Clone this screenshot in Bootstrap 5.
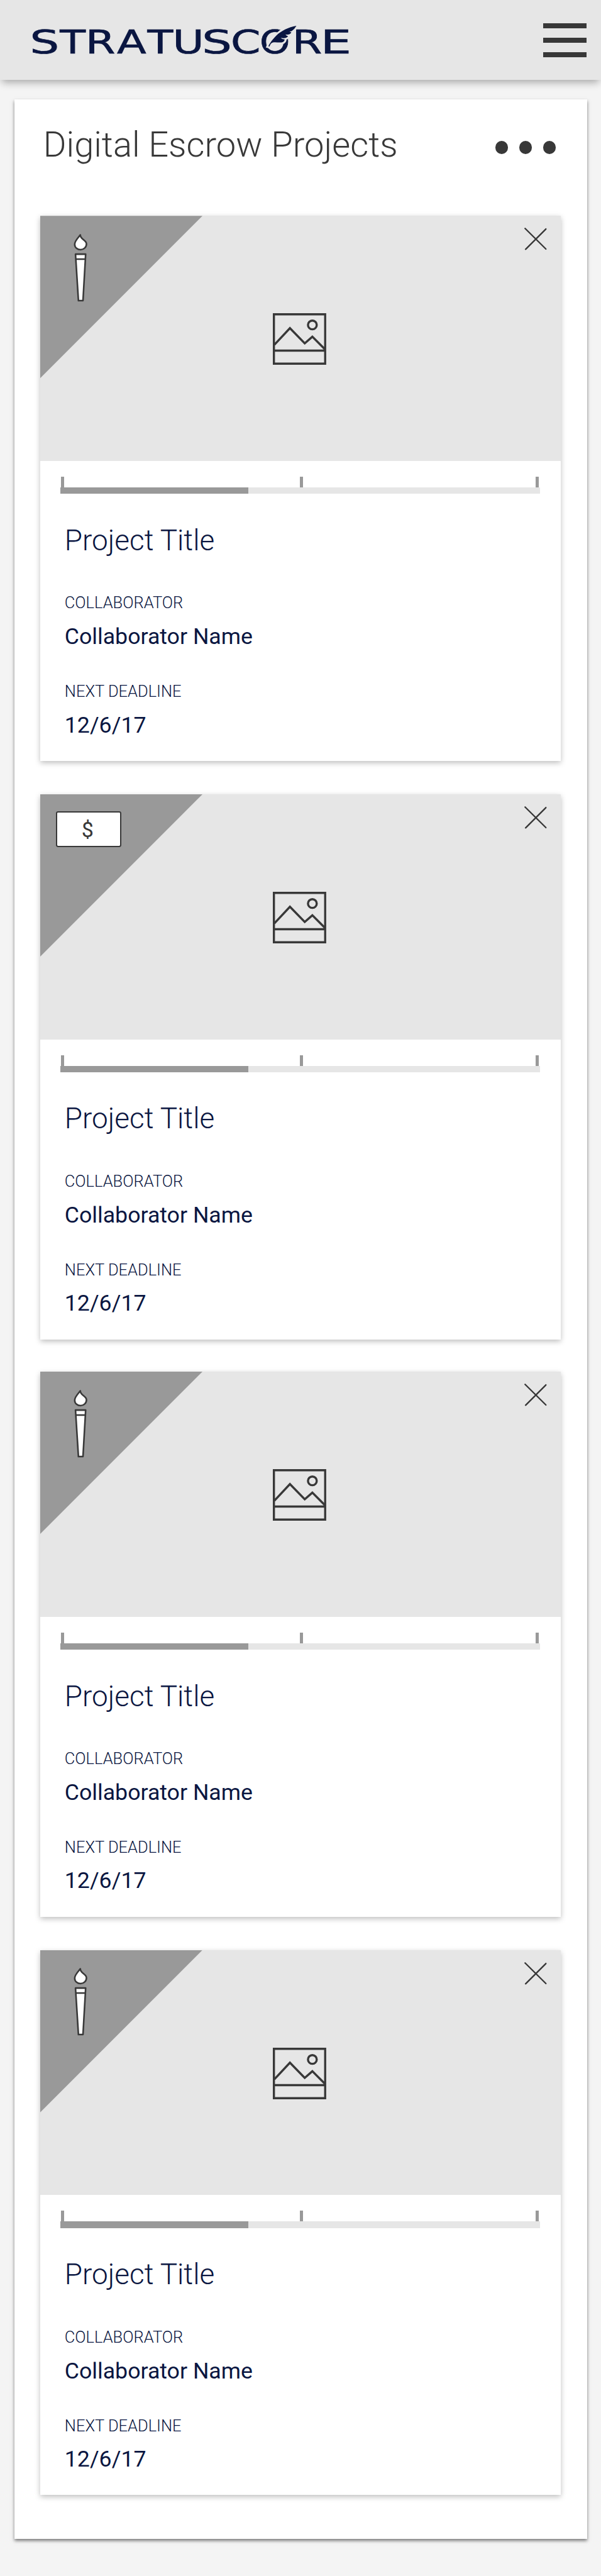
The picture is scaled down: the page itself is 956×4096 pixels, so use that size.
<!DOCTYPE html>
<html lang="en">
<head>
<meta charset="utf-8">
<meta name="viewport" content="width=device-width, initial-scale=1">
<title>Digital Escrow Projects</title>
<link href="https://cdn.jsdelivr.net/npm/bootstrap@5.3.0/dist/css/bootstrap.min.css" rel="stylesheet">
<style>
  /* 1rem is ten design pixels */
  html { font-size: 8.4965px; }
  body { background: #f4f4f4; color: #0a1641; font-family: Roboto, "Liberation Sans", sans-serif; }
  svg { display: block; overflow: visible; }

  .site-bar { height: 15rem; padding: 0 2.7rem 0 6rem; background: #e6e6e6; box-shadow: 0 .8rem 1.4rem -.3rem rgba(0,0,0,.32); }
  .logo { width: 60rem; height: 15rem; margin-left: -6rem; }
  .logo text { font-family: "DejaVu Sans", sans-serif; font-size: 60.4px; fill: #0a1641; stroke: #0a1641; stroke-width: .8px; }
  .menu-btn { width: 8.1rem; height: 6.3rem; color: #383838; margin-top: .3rem; }
  .menu-btn span { height: .9rem; background: currentColor; }

  .panel { width: 107.2rem; height: 456.5rem; margin: 3.6rem 0 7rem 2.7rem; padding: 4.75rem 5rem 0 4.8rem; background: #fff; box-shadow: 0 .3rem .6rem rgba(0,0,0,.5); }
  .panel-head { height: 17.05rem; padding: 0 .8rem 0 .6rem; color: #383838; }
  .panel-head h1 { font-size: 6.6rem; line-height: 7.6rem; font-weight: 300; }
  .dots { gap: 2.1rem; margin-top: 3.05rem; }
  .dots span { width: 2.4rem; height: 2.4rem; background: #383838; border-radius: 50%; }

  .project-list { gap: 6.25rem; }
  .project { width: 97.5rem; height: 102rem; border: 0; border-radius: 0; color: inherit; box-shadow: 0 .3rem 1rem rgba(0,0,0,.26); }
  .project:nth-child(3) { margin-top: -.2rem; }
  .cover { height: 45.85rem; background: #e6e6e6; color: #383838; }
  .corner { width: 30.4rem; height: 30.4rem; background: #999; clip-path: polygon(0 0, 100% 0, 0 100%); }
  .torch { width: 3rem; height: 13rem; left: 6.05rem; top: 3.25rem; }
  .bill { width: 12.2rem; height: 6.75rem; left: 3rem; top: 3.2rem; background: #fff; border: .3rem solid #383838; border-radius: .4rem; font-size: 4rem; line-height: 1; padding-right: .4rem; }
  .close-btn { width: 4.2rem; height: 4.2rem; right: 2.65rem; top: 2.25rem; }
  .photo { width: 10rem; height: 9.7rem; margin: .35rem 0 0 -.4rem; }

  .track { margin: 2.95rem 3.95rem 0 3.75rem; }
  .ticks { height: 2rem; padding: 0 .2rem; }
  .ticks span { width: .6rem; background: #999; }
  .ticks span:nth-child(2) { margin-left: .6rem; }
  .bar { height: 1.2rem; background: #e6e6e6; }
  .bar div { background: #999; }

  .facts { padding: 5.5rem 0 0 4.6rem; }
  .facts h2 { font-size: 5.4rem; line-height: 6.4rem; font-weight: 300; margin: 0 0 6.75rem; }
  .facts dt { font-size: 3rem; line-height: 3.6rem; font-weight: 300; margin-bottom: 2rem; }
  .facts dd { font-size: 4.2rem; line-height: 5rem; font-weight: 400; margin-bottom: 5.95rem; }
</style>
</head>
<body>
<svg width="0" height="0" class="position-absolute" aria-hidden="true">
  <symbol id="torch" viewBox="0 0 30 130" overflow="visible">
    <g fill="#fff" stroke="#383838" stroke-width="3" stroke-linejoin="round">
      <path d="M15 3C13 6 4.500 14 4.500 20.500C4.500 27 10 30.700 15.500 30.700C21.500 30.700 26.500 26 26.500 20C26.500 12 15 12 15 3Z"/>
      <path d="M6 39H25L20 126H11.500Z"/>
      <path d="M6.500 48.300H24.500"/>
    </g>
  </symbol>
  <symbol id="close" viewBox="0 0 42 42">
    <path d="M1.500 1.500L40.500 40M40.500 2.500L2.500 40.500" fill="none" stroke="#383838" stroke-width="2.800" stroke-linecap="round"/>
  </symbol>
  <symbol id="photo" viewBox="0 0 100 97">
    <g fill="none" stroke="#383838" stroke-width="4">
      <path d="M2 2H98V94.500H2ZM2 70H98M3 59L32 28L59.700 56.500L74 44L98 68"/>
      <circle cx="74" cy="22" r="8.200"/>
    </g>
  </symbol>
</svg>

<header class="site-bar d-flex align-items-center justify-content-between position-relative">
  <a href="#" class="text-decoration-none" aria-label="Stratuscore home">
    <svg class="logo" viewBox="0 0 600 150">
      <text y="99.700"><tspan x="56" textLength="55" lengthAdjust="spacingAndGlyphs">S</tspan><tspan x="112" textLength="48" lengthAdjust="spacingAndGlyphs">T</tspan><tspan x="160" textLength="56" lengthAdjust="spacingAndGlyphs">R</tspan><tspan x="219" textLength="55" lengthAdjust="spacingAndGlyphs">A</tspan><tspan x="276" textLength="48" lengthAdjust="spacingAndGlyphs">T</tspan><tspan x="323" textLength="59" lengthAdjust="spacingAndGlyphs">U</tspan><tspan x="378" textLength="56" lengthAdjust="spacingAndGlyphs">S</tspan><tspan x="432" textLength="56" lengthAdjust="spacingAndGlyphs">C</tspan><tspan x="486" textLength="57" lengthAdjust="spacingAndGlyphs">O</tspan><tspan x="547" textLength="56" lengthAdjust="spacingAndGlyphs">R</tspan><tspan x="600" textLength="58" lengthAdjust="spacingAndGlyphs">E</tspan></text>
      <path d="M555 48.300C540 51 526 58 518 66C510 74 505 81 502.500 86.500L504.500 87C506 83 508 80 511 79.500C517 78 524 81 530 78.600C532 77.500 533 75 533 74Q528 73.500 525.400 71Q532 72 535.700 70.700Q538 69.500 539.300 67.700Q536 67 534.400 64.300Q539 65.500 542.400 64Q544.500 62.500 545.500 60.600L542 59L546 58.300Q552 54 555 48.300Z" fill="#0a1641" stroke="#e6e6e6" stroke-width="7" paint-order="stroke"/>
    </svg>
  </a>
  <button type="button" class="menu-btn btn p-0 border-0 rounded-0 d-flex flex-column justify-content-between mb-1" aria-label="Menu"><span class="w-100"></span><span class="w-100"></span><span class="w-100"></span></button>
</header>

<main class="panel">
  <div class="panel-head d-flex justify-content-between align-items-start">
    <h1 class="m-0">Digital Escrow Projects</h1>
    <div class="dots d-flex" role="button" aria-label="More options"><span></span><span></span><span></span></div>
  </div>

  <div class="project-list d-flex flex-column">
    <article class="project card">
      <div class="cover d-flex align-items-center justify-content-center position-relative">
        <div class="corner position-absolute top-0 start-0"></div>
        <svg class="torch position-absolute"><use href="#torch"/></svg>
        <svg class="close-btn position-absolute"><use href="#close"/></svg>
        <svg class="photo"><use href="#photo"/></svg>
      </div>
      <div class="track">
        <div class="ticks d-flex justify-content-between"><span></span><span></span><span></span></div>
        <div class="bar d-flex"><div style="width:39.2%"></div></div>
      </div>
      <div class="facts">
        <h2>Project Title</h2>
        <dl class="m-0"><dt>COLLABORATOR</dt><dd>Collaborator Name</dd><dt>NEXT DEADLINE</dt><dd class="mb-0">12/6/17</dd></dl>
      </div>
    </article>

    <article class="project card">
      <div class="cover d-flex align-items-center justify-content-center position-relative">
        <div class="corner position-absolute top-0 start-0"></div>
        <div class="bill position-absolute d-flex align-items-center justify-content-center">$</div>
        <svg class="close-btn position-absolute"><use href="#close"/></svg>
        <svg class="photo"><use href="#photo"/></svg>
      </div>
      <div class="track">
        <div class="ticks d-flex justify-content-between"><span></span><span></span><span></span></div>
        <div class="bar d-flex"><div style="width:39.2%"></div></div>
      </div>
      <div class="facts">
        <h2>Project Title</h2>
        <dl class="m-0"><dt>COLLABORATOR</dt><dd>Collaborator Name</dd><dt>NEXT DEADLINE</dt><dd class="mb-0">12/6/17</dd></dl>
      </div>
    </article>

    <article class="project card">
      <div class="cover d-flex align-items-center justify-content-center position-relative">
        <div class="corner position-absolute top-0 start-0"></div>
        <svg class="torch position-absolute"><use href="#torch"/></svg>
        <svg class="close-btn position-absolute"><use href="#close"/></svg>
        <svg class="photo"><use href="#photo"/></svg>
      </div>
      <div class="track">
        <div class="ticks d-flex justify-content-between"><span></span><span></span><span></span></div>
        <div class="bar d-flex"><div style="width:39.2%"></div></div>
      </div>
      <div class="facts">
        <h2>Project Title</h2>
        <dl class="m-0"><dt>COLLABORATOR</dt><dd>Collaborator Name</dd><dt>NEXT DEADLINE</dt><dd class="mb-0">12/6/17</dd></dl>
      </div>
    </article>

    <article class="project card">
      <div class="cover d-flex align-items-center justify-content-center position-relative">
        <div class="corner position-absolute top-0 start-0"></div>
        <svg class="torch position-absolute"><use href="#torch"/></svg>
        <svg class="close-btn position-absolute"><use href="#close"/></svg>
        <svg class="photo"><use href="#photo"/></svg>
      </div>
      <div class="track">
        <div class="ticks d-flex justify-content-between"><span></span><span></span><span></span></div>
        <div class="bar d-flex"><div style="width:39.2%"></div></div>
      </div>
      <div class="facts">
        <h2>Project Title</h2>
        <dl class="m-0"><dt>COLLABORATOR</dt><dd>Collaborator Name</dd><dt>NEXT DEADLINE</dt><dd class="mb-0">12/6/17</dd></dl>
      </div>
    </article>
  </div>
</main>
<script src="https://cdn.jsdelivr.net/npm/bootstrap@5.3.0/dist/js/bootstrap.bundle.min.js"></script>
</body>
</html>
